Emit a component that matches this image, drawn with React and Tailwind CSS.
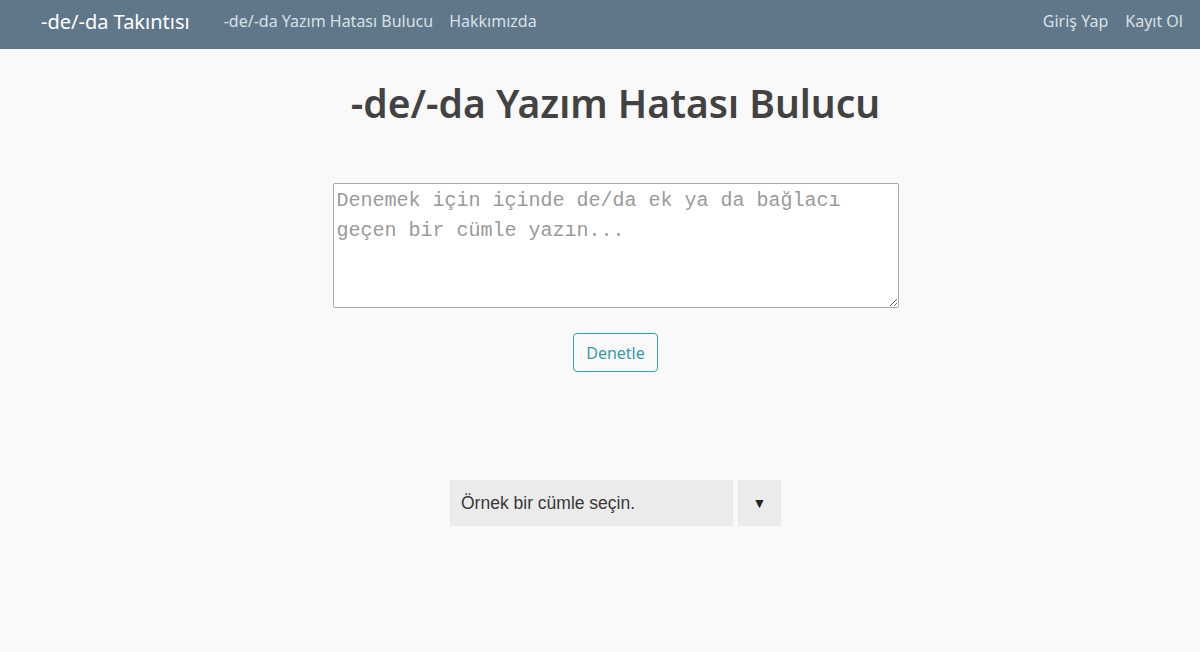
export default function App() {
  const sans = { fontFamily: '"Noto Sans", "Open Sans", sans-serif' };
  return (
    <div className="min-h-[652px] bg-[#f9f9f9]" style={sans}>
      <nav className="h-[49px] bg-[#607789] flex items-center pl-[41px] pr-[17px]">
        <span className="text-white text-[20px] leading-none mr-[34px] -mt-[6px]">-de/-da Takıntısı</span>
        <div className="flex gap-[16px] text-[#d9e0e6] text-[16px] leading-none -mt-[8px]">
          <span>-de/-da Yazım Hatası Bulucu</span>
          <span>Hakkımızda</span>
        </div>
        <div className="ml-auto flex gap-[17px] text-[#d9e0e6] text-[16px] leading-none -mt-[8px]">
          <span>Giriş Yap</span>
          <span>Kayıt Ol</span>
        </div>
      </nav>
      <div className="flex flex-col items-center pl-[31px]">
        <h1 className="mt-[30px] text-[39px] leading-[48px] font-semibold text-[#424242]">-de/-da Yazım Hatası Bulucu</h1>
        <textarea
          className="mt-[56px] w-[566px] h-[125px] bg-white border border-[#a9a9a9] rounded-[2px] px-[3px] py-[2px] text-[20px] leading-[30px] text-[#333] placeholder:text-[#9a9a9a] outline-none"
          style={{ fontFamily: '"Liberation Mono", monospace' }}
          placeholder="Denemek için içinde de/da ek ya da bağlacı geçen bir cümle yazın..."
        />
        <button className="mt-[25px] h-[39px] px-[12px] border border-[#3ca0b2] rounded-[4px] text-[#3a9aab] text-[16px] bg-transparent">Denetle</button>
        <div className="mt-[108px] flex gap-[5px]" style={{ fontFamily: '"Liberation Sans", Arial, sans-serif' }}>
          <div className="w-[283px] h-[46px] bg-[#ebebeb] flex items-center pl-[11px] text-[17.5px] text-[#383838]">Örnek bir cümle seçin.</div>
          <div className="w-[43px] h-[46px] bg-[#ebebeb] flex items-center justify-center text-[14px] text-[#222]">▼</div>
        </div>
      </div>
    </div>
  );
}
